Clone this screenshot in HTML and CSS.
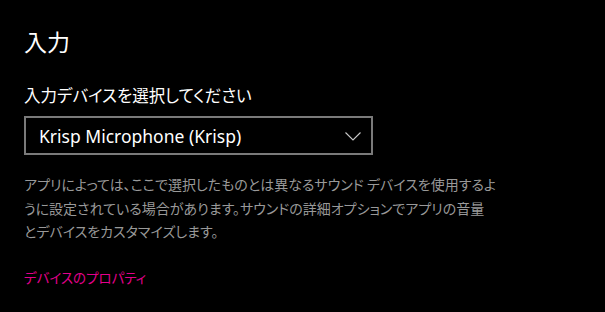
FILE: index.html
```html
<!DOCTYPE html>
<html lang="ja">
<head>
    <meta charset="UTF-8">
    <meta name="viewport" content="width=device-width, initial-scale=1.0">
    <title>入力</title>
    <link rel="stylesheet" href="styles.css">
</head>
<body>
    <div class="page">
        <h1 class="title">入力</h1>

        <!-- 入力デバイス -->
        <div class="label">入力デバイスを選択してください</div>
        <div class="select">
            <span class="select-text">Krisp Microphone (Krisp)</span>
            <svg class="chevron" width="16" height="9" viewBox="0 0 16 9">
                <polyline points="0.5,0.5 8,8 15.5,0.5" fill="none" stroke="#c8c8c8" stroke-width="1.1"/>
            </svg>
        </div>

        <p class="desc">アプリによっては、ここで選択したものとは異なるサウンド デバイスを使用するように設定されている場合があります。サウンドの詳細オプションでアプリの音量<span class="nowrap">とデバイスを</span>カスタマイズします。</p>

        <a class="link" href="#">デバイスのプロパティ</a>
    </div>
</body>
</html>
```

FILE: styles.css
```css
body {
    margin: 0;
    background-color: #000;
    color: #fff;
    font-family: "Noto Sans CJK JP", "Noto Sans", sans-serif;
    font-feature-settings: "palt";
}

.page {
    padding: 25px 24px;
}

.title {
    margin: 0;
    font-size: 23px;
    font-weight: normal;
    line-height: 32px;
}

.label {
    margin-top: 28px;
    font-size: 16.5px;
    line-height: 20px;
}

.select {
    margin-top: 11px;
    width: 349px;
    height: 39px;
    box-sizing: border-box;
    border: 2px solid #7a7a7a;
    display: flex;
    align-items: center;
    justify-content: space-between;
    padding: 0 10px 0 13px;
}

.select-text {
    font-family: "Noto Sans", sans-serif;
    font-size: 17.5px;
    font-feature-settings: normal;
}

.chevron {
    display: block;
    margin-top: 1px;
}

.desc {
    margin: 18px 0 0;
    width: 480px;
    font-size: 14px;
    line-height: 23.5px;
    color: #999;
}

.nowrap {
    white-space: nowrap;
}

.link {
    display: block;
    margin-top: 23px;
    font-size: 13.5px;
    line-height: 20px;
    color: #e3008c;
    text-decoration: none;
}
```
